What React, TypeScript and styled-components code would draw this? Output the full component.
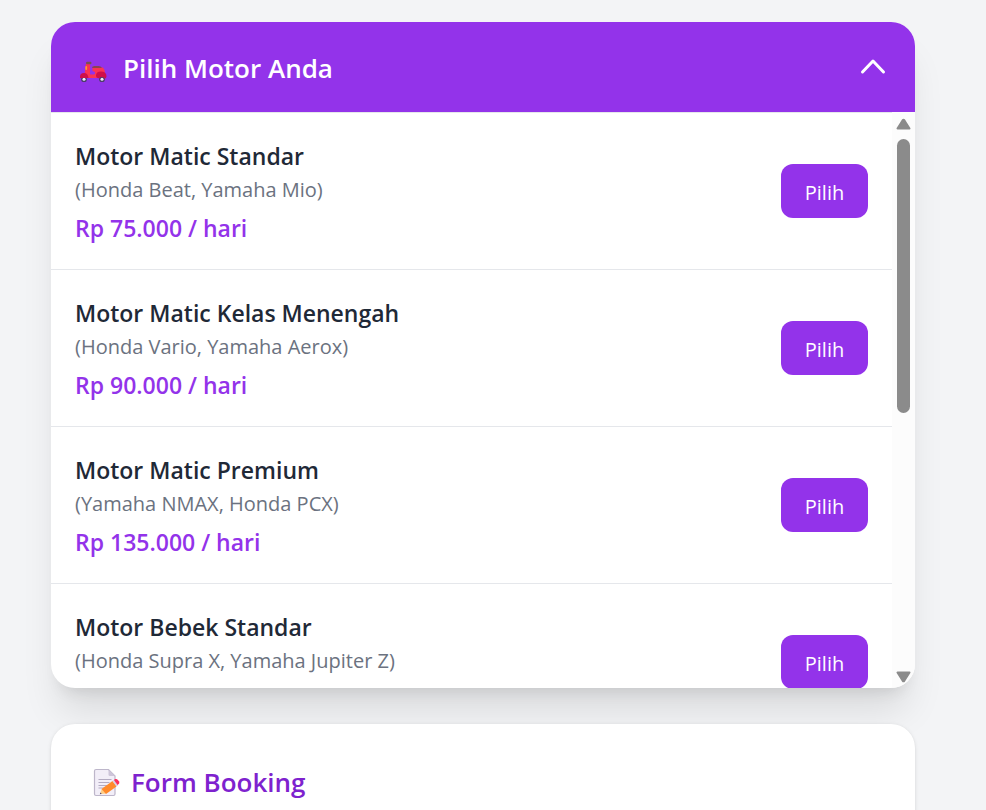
import React, { useState } from "react";
import styled, { createGlobalStyle } from "styled-components";

const GlobalStyle = createGlobalStyle`
  *, *::before, *::after { box-sizing: border-box; }
  html { height: 100%; overflow: hidden; }
  body {
    margin: 0;
    background: #f3f4f6;
    color: #1f2937;
    font-family: "Segoe UI", "Open Sans", "Noto Sans", sans-serif;
  }
  h2, h3, p, ul { margin: 0; padding: 0; }
  button { font: inherit; border: 0; cursor: pointer; }
`;

const Page = styled.main`
  display: flex;
  flex-direction: column;
  gap: 36px;
  padding: 22px 71px 0 51px;
`;

const Card = styled.section`
  overflow: hidden;
  border-radius: 24px;
  background: #ffffff;
  box-shadow: 0 30px 37px -7px rgba(0, 0, 0, 0.1), 0 12px 15px -9px rgba(0, 0, 0, 0.1);
`;

const CardHeader = styled.button`
  display: flex;
  align-items: center;
  justify-content: space-between;
  width: 100%;
  height: 90px;
  padding: 0 24px;
  background: #9333ea;
  color: #ffffff;
  text-align: left;
`;

const HeaderLabel = styled.span`
  display: flex;
  align-items: center;
  gap: 12px;
  padding-top: 2px;
  font-size: 26px;
  font-weight: 600;
  line-height: 42px;
`;

const ListFrame = styled.div`
  display: flex;
  height: 576px;
`;

const MotorList = styled.ul`
  flex: 1;
  min-width: 0;
  overflow-y: auto;
  scrollbar-width: none;
  border-top: 1px solid #e5e7eb;
  list-style: none;
`;

const MotorRow = styled.li`
  display: flex;
  align-items: center;
  justify-content: space-between;
  padding: 24px;
  border-bottom: 1px solid #e5e7eb;
`;

const MotorInfo = styled.div`
  padding-top: 2px;
`;

const MotorName = styled.h3`
  font-size: 23px;
  font-weight: 600;
  line-height: 35px;
`;

const MotorModels = styled.p`
  color: #6b7280;
  font-size: 20px;
  line-height: 32px;
`;

const MotorPrice = styled.p`
  margin-top: 6px;
  color: #9333ea;
  font-size: 23px;
  font-weight: 600;
  line-height: 33px;
`;

const PickButton = styled.button`
  width: 87px;
  height: 54px;
  flex: none;
  padding: 2px 0 0;
  border-radius: 12px;
  background: #9333ea;
  color: #ffffff;
  font-size: 20px;
`;

const ScrollRail = styled.div`
  display: flex;
  flex-direction: column;
  align-items: center;
  width: 23px;
  padding: 6px 0 5px;
  background: #fcfcfc;
`;

const ScrollTrack = styled.div`
  flex: 1;
  margin: 9px 0 5px;
`;

const ScrollThumb = styled.div`
  width: 13px;
  height: 52%;
  border-radius: 7px;
  background: #8b8b8b;
`;

const FormCard = styled(Card)`
  padding: 36px;
  box-shadow: 0 1px 4px rgba(0, 0, 0, 0.1), 0 1px 3px -1px rgba(0, 0, 0, 0.1);
`;

const FormTitle = styled.h2`
  display: flex;
  align-items: center;
  gap: 5px;
  color: #7e22ce;
  font-size: 26px;
  font-weight: 600;
  line-height: 45px;
`;

const ScooterIcon = () => (
  <svg width="36" height="36" viewBox="0 1 36 36" aria-hidden="true">
    <path d="M11 14.500h4v10q0 1.500 1.500 1.500H24v3H12L9.500 26z" fill="#fb3355" />
    <path d="M17.500 18.500h10.500q1.500 2 2 4.500l-3 5h-9.500q-2-1-2-2.500h3.500q1.500-.5 1-2.500l-2.500-1z" fill="#fb3355" />
    <rect x="11" y="12.800" width="5.500" height="2.400" rx="1.200" fill="#7a5151" />
    <rect x="10.300" y="17" width="1.800" height="4" rx=".9" fill="#ff9b2e" />
    <path d="M17 19q0-2 2.500-2h4q2.500 0 3.500 2z" fill="#8b4450" />
    <circle cx="9" cy="30.200" r="2.900" fill="#4b3d68" />
    <circle cx="27" cy="30.200" r="2.900" fill="#4b3d68" />
    <circle cx="9" cy="30.200" r="1.500" fill="#f2edf8" />
    <circle cx="27" cy="30.200" r="1.500" fill="#f2edf8" />
    <path d="M5 29q-.5-5 4-5 4 0 4.500 5z" fill="#cf0f4b" />
    <path d="M21 26.500q0-4 5-4 5.500 0 5.500 5-.3 1.800-1.500 2-1-1.500-3-1.500-2 0-2.800 1.200-3.200 0-3.200-2.700z" fill="#cf0f4b" />
  </svg>
);

const MemoIcon = () => (
  <svg width="39" height="36" viewBox="0 0 39 36" aria-hidden="true">
    <path
      d="M9 4.500h12.500l6.500 6.500v18q0 1.500-1.500 1.500H9q-1.500 0-1.500-1.500V6q0-1.500 1.500-1.500z"
      fill="#f2eef8"
      stroke="#bdb6ca"
      strokeWidth="1.200"
    />
    <path d="M21.500 4.500V9.500q0 1.500 1.500 1.500h5z" fill="#cdc5d9" />
    <path d="M11.500 14.500h13M11.500 17.500h11M11.500 20.500h9M11.500 23h6" stroke="#b3abc2" strokeWidth="1.200" />
    <path d="M12.800 29.300l2-5.300 4.400 4.500z" fill="#ffcf86" />
    <path d="M12.800 29.300l.7-1.900 1.200 1.300z" fill="#433b6b" />
    <path d="M14.500 24L25.500 16l4 5.500-10.500 7.500z" fill="#ff8a2b" />
    <path d="M25.500 16l1.700-1.200 4 5.500-1.700 1.200z" fill="#d8cfe4" />
    <path d="M27 15l1.200-.9q1.500-.7 2.700.8l1.200 1.600q.8 1.500-.4 2.500l-1.200.9z" fill="#fb2f5d" />
  </svg>
);

const Chevron = ({ open }: { open: boolean }) => (
  <svg width="36" height="36" viewBox="0 0 36 36" fill="none" aria-hidden="true">
    <path
      d={open ? "M7.500 23L18 12l10.500 11" : "M7.500 12.500L18 23.500l10.500-11"}
      stroke="#ffffff"
      strokeWidth="3"
      strokeLinecap="round"
      strokeLinejoin="round"
    />
  </svg>
);

const RailArrow = ({ down = false }: { down?: boolean }) => (
  <svg width="15" height="12" viewBox="0 0 15 12" aria-hidden="true">
    <path
      d={down ? "M1.500 1.500h12L8.300 9.800q-.8 1-1.600 0z" : "M1.500 10.500h12L8.300 2.200q-.8-1-1.600 0z"}
      fill="#8b8b8b"
      stroke="#8b8b8b"
      strokeWidth="2"
      strokeLinejoin="round"
    />
  </svg>
);

const motors = [
  { name: "Motor Matic Standar", models: "(Honda Beat, Yamaha Mio)", price: "Rp 75.000 / hari" },
  { name: "Motor Matic Kelas Menengah", models: "(Honda Vario, Yamaha Aerox)", price: "Rp 90.000 / hari" },
  { name: "Motor Matic Premium", models: "(Yamaha NMAX, Honda PCX)", price: "Rp 135.000 / hari" },
  { name: "Motor Bebek Standar", models: "(Honda Supra X, Yamaha Jupiter Z)", price: "" },
];

export default function App() {
  const [open, setOpen] = useState(true);
  return (
    <>
      <GlobalStyle />
      <Page>
        <Card>
          <CardHeader type="button" aria-expanded={open} onClick={() => setOpen(!open)}>
            <HeaderLabel>
              <ScooterIcon />
              Pilih Motor Anda
            </HeaderLabel>
            <Chevron open={open} />
          </CardHeader>
          {open && (
            <ListFrame>
              <MotorList>
                {motors.map((motor) => (
                  <MotorRow key={motor.name}>
                    <MotorInfo>
                      <MotorName>{motor.name}</MotorName>
                      <MotorModels>{motor.models}</MotorModels>
                      <MotorPrice>{motor.price || "\u00a0"}</MotorPrice>
                    </MotorInfo>
                    <PickButton type="button">Pilih</PickButton>
                  </MotorRow>
                ))}
              </MotorList>
              <ScrollRail aria-hidden="true">
                <RailArrow />
                <ScrollTrack>
                  <ScrollThumb />
                </ScrollTrack>
                <RailArrow down />
              </ScrollRail>
            </ListFrame>
          )}
        </Card>
        <FormCard>
          <FormTitle>
            <MemoIcon />
            Form Booking
          </FormTitle>
        </FormCard>
      </Page>
    </>
  );
}
